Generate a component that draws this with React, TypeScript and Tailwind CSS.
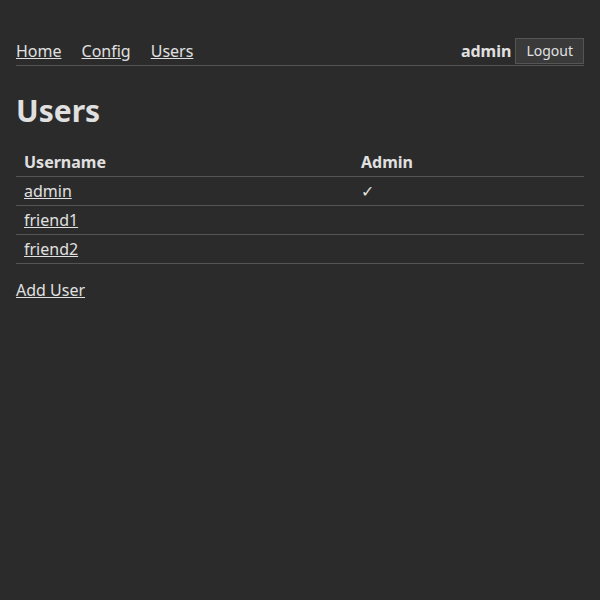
export default function App() {
  const users = [
    { name: "admin", admin: true },
    { name: "friend1", admin: false },
    { name: "friend2", admin: false },
  ]
  return (
    <div className="min-h-[600px] bg-[#2b2b2b] text-[#e0e0e0] px-4 pt-[38px] font-['Liberation_Sans',Arial,sans-serif] text-base leading-[22px]">
      <nav className="flex items-center justify-between border-b border-[#555] pb-[1px]">
        <div className="flex gap-5">
          <a className="underline">Home</a>
          <a className="underline">Config</a>
          <a className="underline">Users</a>
        </div>
        <div className="flex items-center gap-1">
          <span className="font-bold">admin</span>
          <button className="bg-[#3a3a3a] border border-[#555] text-sm px-[10px] h-[26px]">Logout</button>
        </div>
      </nav>
      <h1 className="text-[30px] font-bold mt-[27px] mb-[19px] leading-9">Users</h1>
      <table className="w-full border-collapse">
        <thead>
          <tr className="border-b border-[#555]">
            <th className="text-left px-2 py-[3px] w-[337px]">Username</th>
            <th className="text-left px-2 py-[3px]">Admin</th>
          </tr>
        </thead>
        <tbody>
          {users.map((u) => (
            <tr key={u.name} className="border-b border-[#555]">
              <td className="px-2 py-[3px]"><a className="underline">{u.name}</a></td>
              <td className="px-2 py-[3px]">{u.admin ? "✓" : ""}</td>
            </tr>
          ))}
        </tbody>
      </table>
      <a className="underline block mt-[15px]">Add User</a>
    </div>
  )
}
